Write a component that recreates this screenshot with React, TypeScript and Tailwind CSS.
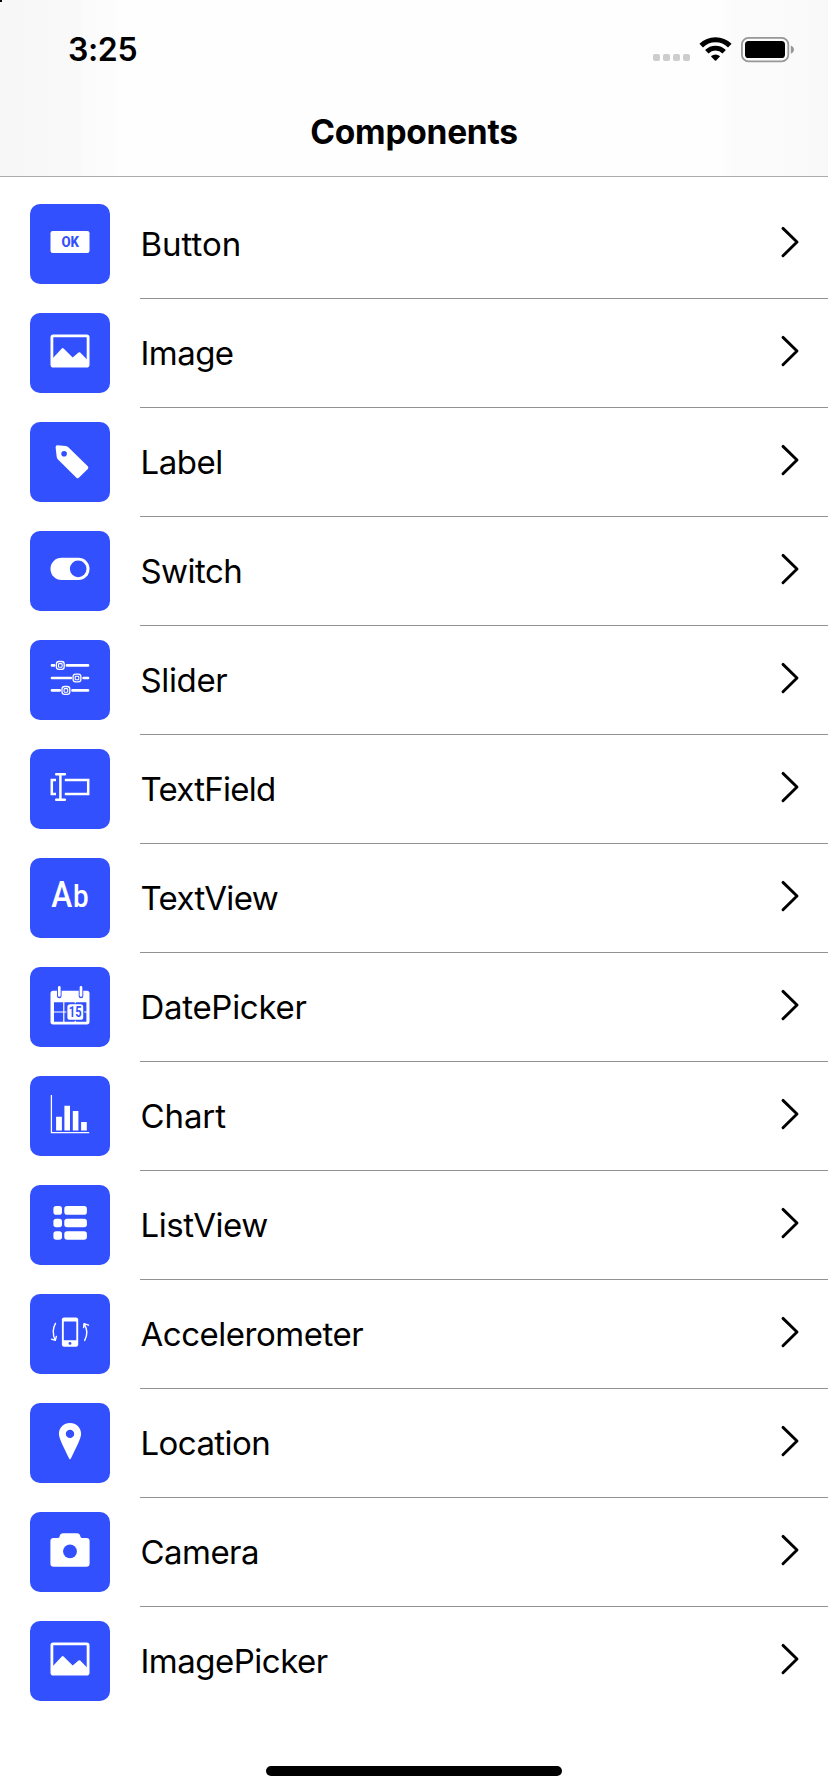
import type { ReactNode } from "react";

const BLUE = "#3350ff";

const pictureIcon = (
  <>
    <rect x="21.9" y="22.9" width="36.2" height="30.2" rx="1.4" fill="none" stroke="#fff" strokeWidth="2.8" />
    <path d="M23 45 L31.8 35.4 Q32.7 34.5 33.6 35.4 L42.7 44.4 L48.5 39.5 Q49.4 38.8 50.2 39.5 L57 46.6 V53.5 H23 Z" />
  </>
);

function SliderTrack({ y, knob }: { y: number; knob: number }) {
  return (
    <g>
      <path d={`M22 ${y} H${knob - 6.2} M${knob + 6.6} ${y} H58`} stroke="#fff" strokeWidth="2.7" strokeLinecap="round" />
      <rect x={knob - 3.9} y={y - 3.9} width="7.8" height="7.8" rx="2.6" fill="none" stroke="#fff" strokeWidth="1.3" />
      <rect x={knob - 1.8} y={y - 1.8} width="3.6" height="3.6" rx="0.8" fill="none" stroke="#fff" strokeWidth="1.1" />
    </g>
  );
}

const items: { name: string; tracking: string; icon: ReactNode }[] = [
  {
    name: "Button",
    tracking: "tracking-[0px]",
    icon: (
      <>
        <rect x="20.5" y="27" width="39" height="22" rx="2.2" />
        <text x="31.4" y="43.2" fontSize="15.2" fontWeight="800" fontFamily="Roboto, sans-serif" fill={BLUE} textLength="17.6" lengthAdjust="spacingAndGlyphs">OK</text>
      </>
    ),
  },
  { name: "Image", tracking: "tracking-[-0.55px]", icon: pictureIcon },
  {
    name: "Label",
    tracking: "tracking-[-0.5px]",
    icon: (
      <path
        fillRule="evenodd"
        d="M27.6 23.3 L35.6 24 Q37.4 24.2 38.6 25.4 L57.8 44.2 Q59 45.6 57.8 46.9 L48.8 55.8 Q47.6 56.9 46.4 55.8 L28 37.6 Q26.8 36.4 26.7 34.8 L25.6 25.4 Q25.5 23.2 27.6 23.3 Z M34.1 29 A2.8 2.8 0 1 0 34.1 34.6 A2.8 2.8 0 1 0 34.1 29 Z"
      />
    ),
  },
  {
    name: "Switch",
    tracking: "tracking-[-0.55px]",
    icon: (
      <>
        <rect x="20.5" y="26.8" width="39" height="22.2" rx="11.1" />
        <circle cx="48.2" cy="37.9" r="8.3" fill={BLUE} />
      </>
    ),
  },
  {
    name: "Slider",
    tracking: "tracking-[-0.35px]",
    icon: (
      <>
        <SliderTrack y={25.4} knob={30.3} />
        <SliderTrack y={38} knob={47} />
        <SliderTrack y={50.4} knob={35.9} />
      </>
    ),
  },
  {
    name: "TextField",
    tracking: "tracking-[-0.75px]",
    icon: (
      <g fill="none" stroke="#fff" strokeWidth="2.5">
        <path d="M30.4 25.4 V50.8 M26.2 25.3 H34.9 M26.2 50.8 H34.9" strokeLinecap="round" />
        <path d="M34.8 31 H58.2 V45.1 H34.8" />
        <path d="M26 31 H21.8 V45.1 H26" />
      </g>
    ),
  },
  {
    name: "TextView",
    tracking: "tracking-[-0.65px]",
    icon: (
      <g fontFamily="Roboto, sans-serif">
        <text x="21.2" y="49.3" fontSize="36.8" fontWeight="500" textLength="21" lengthAdjust="spacingAndGlyphs">A</text>
        <text x="42.9" y="49.3" fontSize="30.6" fontWeight="500" textLength="15.6" lengthAdjust="spacingAndGlyphs">b</text>
      </g>
    ),
  },
  {
    name: "DatePicker",
    tracking: "tracking-[-0.3px]",
    icon: (
      <>
        <rect x="20.5" y="23.8" width="39" height="33.6" rx="2.6" />
        <path d="M24 35.2 H56.4 V54.8 H24 Z" fill={BLUE} />
        <path d="M33.8 35 V55 M45.3 35 V55 M24 45 H57" stroke="#fff" strokeWidth="1.2" />
        <path d="M29.3 23 V29 M51 23 V29" stroke={BLUE} strokeWidth="4.6" strokeLinecap="round" />
        <path d="M29.3 20.4 V28.4 M51 20.4 V28.4" stroke="#fff" strokeWidth="2.7" strokeLinecap="round" />
        <rect x="36.4" y="36.2" width="17.8" height="17.6" rx="3" fill={BLUE} />
        <rect x="37.4" y="37.2" width="15.8" height="15.6" rx="2.6" />
        <text x="38.8" y="50" fontSize="14" fontWeight="700" fontFamily="Roboto, sans-serif" fill={BLUE} textLength="12.8" lengthAdjust="spacingAndGlyphs">15</text>
      </>
    ),
  },
  {
    name: "Chart",
    tracking: "tracking-[-0.1px]",
    icon: (
      <>
        <path d="M21.4 19 V56.6 H59.2" fill="none" stroke="#fff" strokeWidth="1.3" />
        <path d="M26.1 40.7 h5.8 v13.8 h-5.8 Z M34.4 29.7 h5.6 v24.8 h-5.6 Z M42.8 35 h5.6 v19.5 h-5.6 Z M51.1 46 h5.7 v8.5 h-5.7 Z" />
      </>
    ),
  },
  {
    name: "ListView",
    tracking: "tracking-[-0.45px]",
    icon: (
      <>
        {[21.1, 33.7, 46.2].map((y) => (
          <g key={y}>
            <rect x="23.4" y={y} width="8.6" height="8.6" rx="2.8" />
            <rect x="34.3" y={y} width="22.6" height="8.6" rx="2.8" />
          </g>
        ))}
      </>
    ),
  },
  {
    name: "Accelerometer",
    tracking: "tracking-[-0.48px]",
    icon: (
      <>
        <rect x="31.9" y="23.4" width="16.3" height="29.3" rx="2.2" />
        <path d="M33.8 27.5 H46.3 V46.2 H33.8 Z" fill={BLUE} />
        <circle cx="40" cy="49.4" r="1.4" fill={BLUE} />
        <g fill="none" stroke="#fff" strokeWidth="1.4" strokeLinecap="round" strokeLinejoin="round">
          <path d="M25.5 29.4 C22.8 34 22.6 40.4 25.2 46.2 M21.5 45.2 L25.3 46.4 L26.4 42.4" />
          <path d="M54.7 46.4 C57.6 41 57.4 35 54.2 29.8 M53.6 33.6 L54 29.6 L58.5 31.2" />
        </g>
      </>
    ),
  },
  {
    name: "Location",
    tracking: "tracking-[-0.58px]",
    icon: (
      <path
        fillRule="evenodd"
        d="M40 20 C46.2 20 51.1 24.6 51.1 30.8 C51.1 35.4 46.2 44.4 40.9 55.6 Q40 57.2 39.1 55.6 C33.8 44.4 28.9 35.4 28.9 30.8 C28.9 24.6 33.8 20 40 20 Z M40 26.7 A4.2 4.2 0 1 0 40 35.1 A4.2 4.2 0 1 0 40 26.7 Z"
      />
    ),
  },
  {
    name: "Camera",
    tracking: "tracking-[-0.55px]",
    icon: (
      <>
        <path d="M23.5 26 H28 Q29.5 26 29.6 24.6 Q30 21.2 33.2 21.2 H46.8 Q50 21.2 50.4 24.6 Q50.5 26 52 26 H56.5 Q59.6 26 59.6 29.2 V51.4 Q59.6 54.7 56.4 54.7 H23.6 Q20.4 54.7 20.4 51.4 V29.2 Q20.4 26 23.5 26 Z" />
        <circle cx="40" cy="39.4" r="6.9" fill={BLUE} />
      </>
    ),
  },
  { name: "ImagePicker", tracking: "tracking-[-0.5px]", icon: pictureIcon },
];

function StatusIcons() {
  return (
    <div className="flex items-start pt-[37px]">
      <div className="mt-[17px] flex gap-[3px]">
        {[0, 1, 2, 3].map((dot) => (
          <span key={dot} className="size-[7px] rounded-[2px] bg-[#cdcdcd]" />
        ))}
      </div>
      <svg className="ml-[9px]" width="34" height="25" viewBox="0 0 34 25">
        <g fill="none" stroke="#000">
          <path d="M2.2 8.6 A20.4 20.4 0 0 1 30.8 8.6" strokeWidth="5" />
          <path d="M7.8 14.7 A12.4 12.4 0 0 1 25.2 14.7" strokeWidth="4.8" />
        </g>
        <path d="M12.2 19 A6.6 6.6 0 0 1 20.8 19 Q21.1 19.4 20.7 19.8 L17.1 23.6 Q16.5 24.1 15.9 23.6 L12.3 19.8 Q11.9 19.4 12.2 19 Z" />
      </svg>
      <svg className="ml-[8px]" width="54" height="26" viewBox="0 0 54 26">
        <rect x="0.9" y="0.9" width="46.4" height="23.4" rx="6.6" fill="none" stroke="#979797" strokeWidth="1.8" />
        <rect x="4" y="4" width="40" height="17" rx="3.6" />
        <path d="M49.8 8.4 Q53 9.8 53 12.6 Q53 15.4 49.8 16.8 Z" fill="#979797" />
      </svg>
    </div>
  );
}

export default function App() {
  return (
    <div className="flex h-[1792px] w-[828px] flex-col overflow-hidden bg-white font-['Inter','Liberation_Sans',sans-serif] text-black">
      <header className="relative h-[177px] shrink-0 border-b border-[#acacac] bg-[linear-gradient(90deg,#f7f7f7_0,#f9f9f9_78px,#fbfbfb_84px,#fcfcfc_112px,#fefefe_118px,#fefefe_722px,#fbfbfb_732px,#fafafa_800px,#f8f8f8_828px)]">
        <span className="absolute left-0 top-0 size-[2px] bg-black" />
        <div className="flex h-[99px] justify-between pl-[68px] pr-[33px]">
          <time className="pt-[30px] text-[32px] font-semibold leading-[40px] tracking-[-0.35px]">3:25</time>
          <StatusIcons />
        </div>
        <h1 className="pt-[13px] text-center text-[33.5px] font-bold leading-[40px] tracking-[-0.25px]">Components</h1>
      </header>
      <ul className="mt-[13px] flex flex-col">
        {items.map((item, index) => (
          <li key={item.name} className="flex h-[109px] items-stretch pl-[30px]">
            <svg className="mt-[14px] size-[80px] shrink-0 rounded-[10px] bg-[#3350ff]" viewBox="0 0 80 80" fill="#fff">
              {item.icon}
            </svg>
            <div className={`ml-[30px] flex flex-1 justify-between pr-[28px] ${index < items.length - 1 ? "border-b border-[#929292]" : ""}`}>
              <span className={`pl-[0.5px] pt-[34px] text-[33px] leading-[40px] ${item.tracking}`}>{item.name}</span>
              <svg className="mt-[36px]" width="20" height="32" viewBox="0 0 20 32" fill="none" stroke="#000" strokeWidth="2.9" strokeLinecap="round" strokeLinejoin="round">
                <path d="M3 2.4 L17 16 L3 29.8" />
              </svg>
            </div>
          </li>
        ))}
      </ul>
      <div className="mb-[16px] mt-auto h-[10px] w-[296px] shrink-0 self-center rounded-full bg-black" />
    </div>
  );
}
